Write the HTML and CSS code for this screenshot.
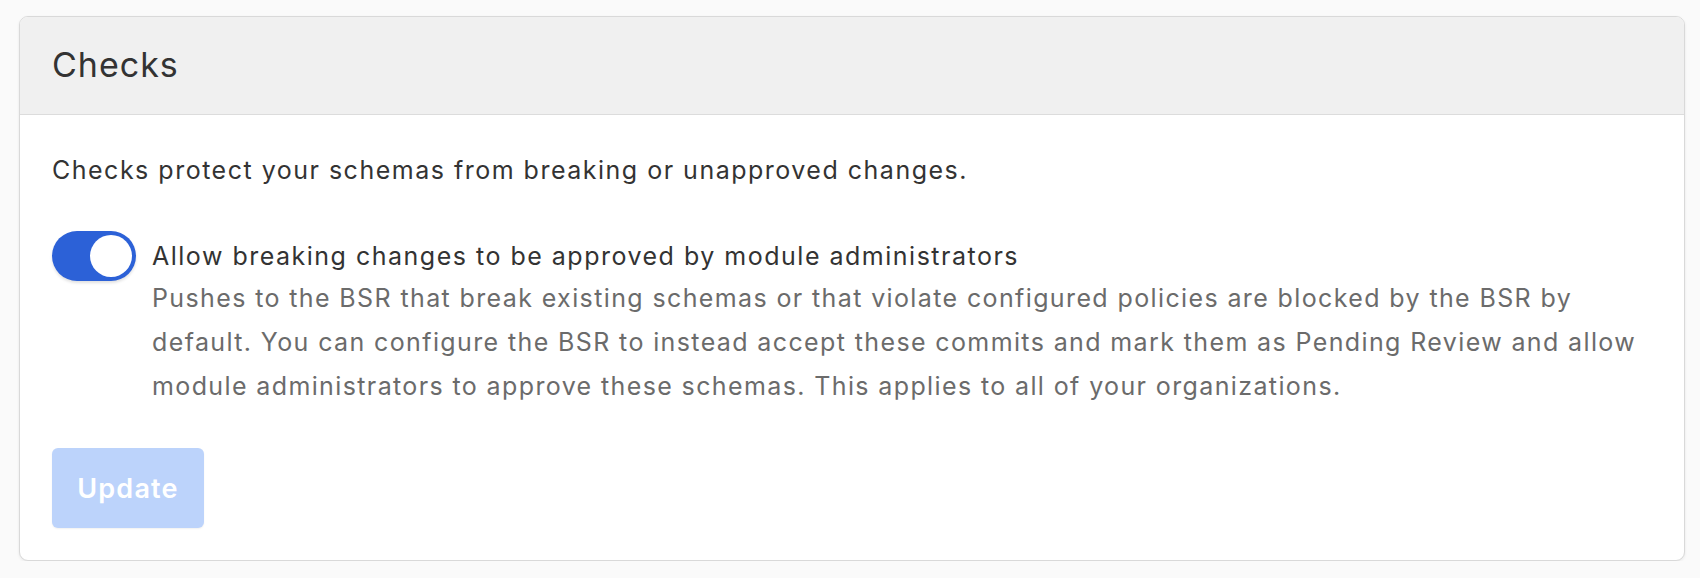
FILE: index.html
```html
<!DOCTYPE html>
<html lang="en">
<head>
<meta charset="utf-8">
<title>Checks</title>
<link rel="stylesheet" href="styles.css">
</head>
<body>
  <section class="card">
    <header class="card-header">
      <h2 class="card-title">Checks</h2>
    </header>
    <div class="card-body">
      <p class="intro">Checks protect your schemas from breaking or unapproved changes.</p>
      <div class="setting">
        <button class="toggle" type="button" role="switch" aria-checked="true"><span class="knob"></span></button>
        <div class="setting-text">
          <div class="setting-label">Allow breaking changes to be approved by module administrators</div>
          <p class="setting-desc">Pushes to the BSR that break existing schemas or that violate configured policies are blocked by the BSR by default. You can configure the BSR to instead accept these commits and mark them as Pending Review and allow module administrators to approve these schemas. This applies to all of your organizations.</p>
        </div>
      </div>
      <button class="update-btn" type="button" disabled>Update</button>
    </div>
  </section>
</body>
</html>
```

FILE: styles.css
```css
* { box-sizing: border-box; }

html, body {
  margin: 0;
  padding: 0;
}

body {
  background: #fafafa;
  font-family: Inter, "Noto Sans", "Liberation Sans", sans-serif;
  color: #333333;
  padding: 16px 15px 0 19px;
}

.card {
  width: 1666px;
  height: 545px;
  background: #ffffff;
  border: 1px solid #d9d9d9;
  border-radius: 9px;
  box-shadow: 0 1px 3px rgba(0, 0, 0, 0.08);
  overflow: hidden;
  display: flex;
  flex-direction: column;
}

.card-header {
  height: 98px;
  background: #f0f0f0;
  border-bottom: 1px solid #dcdcdc;
  display: flex;
  align-items: center;
  padding: 0 32px 2px;
}

.card-title {
  margin: 0;
  font-size: 34px;
  font-weight: 400;
  color: #333333;
  letter-spacing: 1px;
}

.card-body {
  padding: 37px 12px 32px 32px;
  display: flex;
  flex-direction: column;
  align-items: stretch;
}

.intro {
  margin: 0 0 42px;
  font-size: 25px;
  line-height: 37px;
  color: #333333;
  letter-spacing: 1.5px;
}

.setting {
  display: flex;
  align-items: flex-start;
  gap: 16px;
}

.toggle {
  flex: 0 0 auto;
  width: 84px;
  height: 50px;
  border: none;
  border-radius: 25px;
  background: #2c61d7;
  padding: 4px;
  display: flex;
  justify-content: flex-end;
  align-items: center;
  box-shadow: 0 2px 3px rgba(0, 0, 0, 0.12);
  cursor: pointer;
}

.knob {
  width: 42px;
  height: 42px;
  border-radius: 50%;
  background: #ffffff;
}

.setting-text {
  flex: 1 1 auto;
  display: flex;
  flex-direction: column;
}

.setting-label {
  padding-top: 4px;
  font-size: 25px;
  line-height: 42px;
  color: #333333;
  letter-spacing: 1.5px;
}

.setting-desc {
  margin: -1px 0 0;
  font-size: 25px;
  line-height: 44px;
  color: #6b6b6b;
  letter-spacing: 1.38px;
}

.update-btn {
  align-self: flex-start;
  margin-top: 40px;
  width: 152px;
  height: 80px;
  border: none;
  border-radius: 6px;
  background: #bcd3fb;
  color: #ffffff;
  font-family: Inter, "Noto Sans", "Liberation Sans", sans-serif;
  font-size: 27px;
  font-weight: 600;
  letter-spacing: 1.2px;
  box-shadow: 0 1px 2px rgba(0, 0, 0, 0.06);
}
```
